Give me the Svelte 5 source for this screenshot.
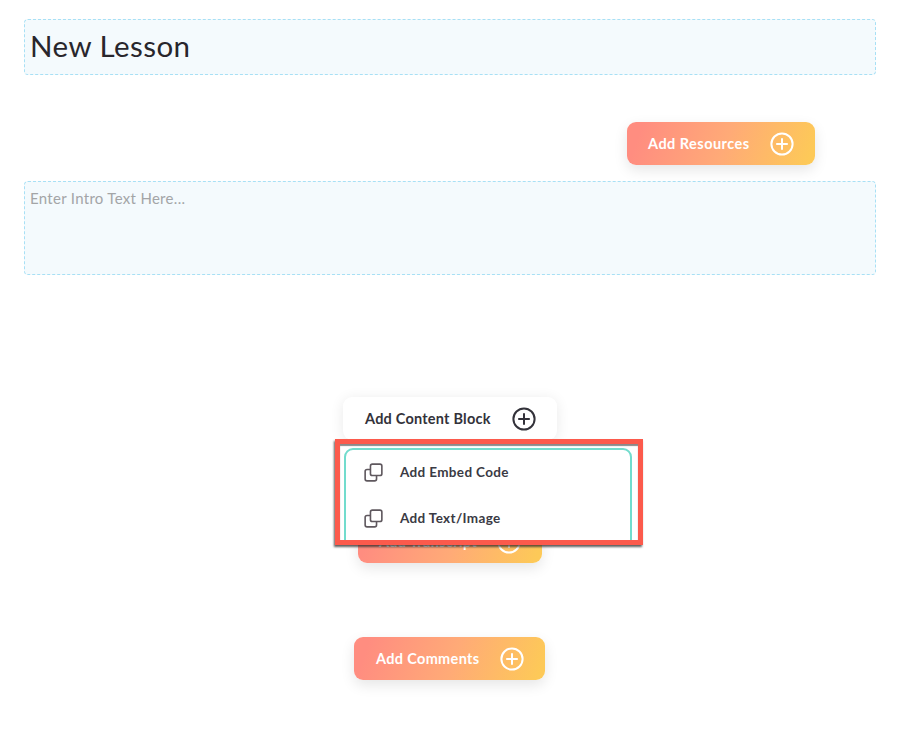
<script>
  const menuItems = ['Add Embed Code', 'Add Text/Image'];
</script>

{#snippet plus()}
  <svg class="plus" viewBox="0 0 24 24" aria-hidden="true">
    <circle cx="12" cy="12" r="10.6" />
    <path d="M12 6.2v11.6M6.2 12h11.6" />
  </svg>
{/snippet}

{#snippet copy()}
  <svg class="copy" viewBox="0 0 20 20" aria-hidden="true">
    <rect x="1.2" y="6.8" width="12" height="12" rx="2" />
    <rect x="6.8" y="1.2" width="12" height="12" rx="2" />
  </svg>
{/snippet}

<main class="page">
  <h1 class="title">New Lesson</h1>

  <div class="resources">
    <button class="grad res">Add Resources {@render plus()}</button>
  </div>

  <div class="intro">Enter Intro Text Here...</div>

  <section class="stack">
    <div class="block-wrap">
      <button class="block">Add Content Block {@render plus()}</button>
      <div class="callout">
        <ul class="menu">
          {#each menuItems as item}
            <li>{@render copy()}<span>{item}</span></li>
          {/each}
        </ul>
      </div>
    </div>
    <button class="grad transcript">Add Transcript {@render plus()}</button>
    <button class="grad comments">Add Comments {@render plus()}</button>
  </section>
</main>

<style>
  :global(body) {
    margin: 0;
    background: #fff;
  }
  .page {
    box-sizing: border-box;
    height: 733px;
    padding: 19px 24px 0;
    overflow: hidden;
    font-family: Lato, "Liberation Sans", sans-serif;
  }
  .title {
    box-sizing: border-box;
    height: 56px;
    margin: 0;
    padding: 0 0 4px 5px;
    display: flex;
    align-items: center;
    font-size: 29.5px;
    font-weight: 400;
    letter-spacing: 0.45px;
    color: #28262c;
    background: #f4fafd;
    border: 1px dashed #a8e0f5;
    border-radius: 4px;
  }
  .resources {
    display: flex;
    justify-content: flex-end;
    padding-right: 61px;
    margin-top: 47px;
  }
  .intro {
    box-sizing: border-box;
    height: 94px;
    margin-top: 16px;
    padding: 7px 5px;
    font-size: 15px;
    letter-spacing: 0.3px;
    color: #a3a5a7;
    background: #f4fafd;
    border: 1px dashed #a8e0f5;
    border-radius: 4px;
  }
  .stack {
    display: flex;
    flex-direction: column;
    align-items: center;
    margin-top: 122px;
  }
  button {
    box-sizing: border-box;
    display: flex;
    align-items: center;
    justify-content: space-between;
    height: 43px;
    border: 0;
    border-radius: 9px;
    font: 700 14.5px Lato, "Liberation Sans", sans-serif;
    letter-spacing: 0.33px;
  }
  .grad {
    color: #fff;
    background: linear-gradient(110deg, #ff8d80 8%, #ffaa77 52%, #fdc958 96%);
    box-shadow: 0 5px 14px rgba(0, 0, 0, 0.1);
  }
  .res {
    width: 188px;
    padding: 0 21px;
    letter-spacing: 0.47px;
  }
  .block-wrap {
    position: relative;
    z-index: 1;
  }
  .block {
    width: 214px;
    padding: 0 21px 0 22px;
    color: #33323a;
    background: #fff;
    box-shadow: 0 2px 14px rgba(0, 0, 0, 0.09);
    letter-spacing: 0.22px;
  }
  .plus {
    width: 24px;
    height: 24px;
    flex: none;
    fill: none;
    stroke: currentColor;
    stroke-width: 2;
  }
  .callout {
    position: absolute;
    left: -8px;
    top: 42px;
    box-sizing: border-box;
    width: 308px;
    height: 106px;
    padding: 4px 6px 0 4px;
    background: #fff;
    border: 5px solid #fc5a4c;
    box-shadow: -1px 2px 2px rgba(40, 40, 40, 0.75), inset 0 2px 1px rgba(60, 60, 60, 0.6);
    overflow: hidden;
  }
  .menu {
    list-style: none;
    box-sizing: border-box;
    height: 110px;
    margin: 0;
    padding: 0 0 0 18px;
    background: #fff;
    border: 2px solid #72dccd;
    border-radius: 9px;
    font-size: 13.5px;
    font-weight: 700;
    letter-spacing: 0.35px;
    color: #3a3a44;
  }
  .menu li {
    box-sizing: border-box;
    display: flex;
    align-items: center;
    height: 46px;
    padding-bottom: 2px;
  }
  .copy {
    width: 19px;
    height: 19px;
    margin-right: 17px;
    fill: #fff;
    stroke: #5f585e;
    stroke-width: 1.7;
  }
  .transcript {
    width: 184px;
    margin-top: 80px;
    padding: 0 21px;
    position: relative;
    z-index: 0;
  }
  .comments {
    width: 191px;
    margin-top: 74px;
    margin-right: 1px;
    padding: 0 21px 0 22px;
  }
</style>
